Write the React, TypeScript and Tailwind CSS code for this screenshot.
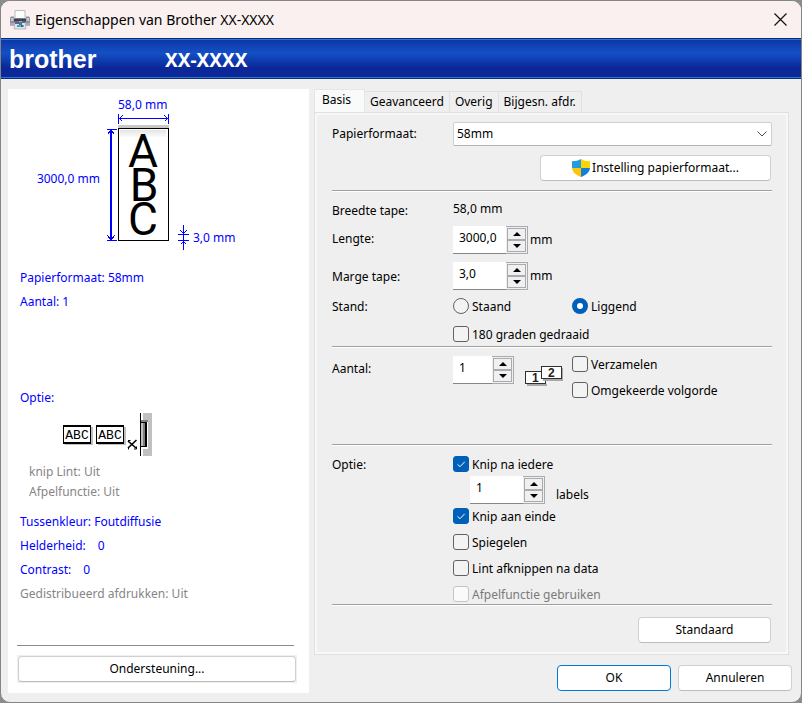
import { useState } from "react";
import type { ReactNode } from "react";

const TABS = ["Geavanceerd", "Overig", "Bijgesn. afdr."];

const BUTTON =
  "flex h-[26px] items-center justify-center rounded-[4px] border border-[#d0d0d0] border-b-[#bcbcbc] bg-white hover:bg-[#f5f9fd]";

function PrinterIcon() {
  return (
    <svg width="20" height="20" viewBox="0 0 20 20" aria-hidden="true">
      <path d="M5 .5h10v8H5z" fill="#fdfdfd" stroke="#b9bcc0" />
      <path d="M1 6.5Q0 7 0 9v6.5h20V9q0-2-1-2.500h-3V10H4V6.500z" fill="#8d9296" />
      <path d="M1 8h2.500v3H1zM16.500 8H19v3h-2.500z" fill="#c6cacd" />
      <path d="M4 8.500h12v3.500H4z" fill="#3c4248" />
      <path d="M0 13h20v2.500H0z" fill="#a7abae" />
      <path d="M5 11.500h10L16 19H4z" fill="#dfe4e6" stroke="#aeb3b6" strokeWidth=".8" />
      <path d="M5 11h4v3H5z" fill="#7b4fae" />
      <path d="M9 12h3v3H9z" fill="#2f8f6a" />
      <path d="M12 11h3v2h-3z" fill="#3c6bd0" />
      <path d="M7 15h3v2H7z" fill="#3bb3a3" />
      <path d="M10.500 15h3v2h-3z" fill="#4058b8" />
    </svg>
  );
}

function ShieldIcon() {
  return (
    <svg width="18" height="18" viewBox="0 0 18 18" aria-hidden="true">
      <path d="M9 0C6.500 1.600 3.500 2.200 0 2.200V9h9z" fill="#1f9ce4" />
      <path d="M9 0c2.500 1.600 5.500 2.200 9 2.200V9H9z" fill="#ffd400" />
      <path d="M0 9c.3 4 3.600 7 9 9V9z" fill="#ffc40a" />
      <path d="M18 9c-.3 4-3.600 7-9 9V9z" fill="#1180d6" />
    </svg>
  );
}

function CollateIcon() {
  return (
    <svg width="39" height="21" viewBox="0 0 39 21" aria-hidden="true">
      <path d="M2 18h20v2H2z" fill="#a8a8a8" />
      <rect x=".5" y="5.500" width="20" height="12" fill="#fff" stroke="#303030" />
      <text x="7" y="16" fontSize="12" fontWeight="700" fontFamily="Liberation Sans, sans-serif" fill="#222">
        1
      </text>
      <path d="M18 13h20v2H18zM37 2h1v13h-1z" fill="#a8a8a8" />
      <rect x="16.500" y=".5" width="20" height="12" fill="#fff" stroke="#303030" />
      <text x="23" y="11" fontSize="12" fontWeight="700" fontFamily="Liberation Sans, sans-serif" fill="#222">
        2
      </text>
    </svg>
  );
}

function TapePreview() {
  return (
    <svg width="301" height="168" viewBox="0 0 301 168" role="img" aria-label="Voorbeeld van tape">
      <defs>
        <linearGradient id="tape" x1="0" y1="0" x2="0" y2="1">
          <stop offset="0" stopColor="#e4e6e6" />
          <stop offset="1" stopColor="#fafbfb" />
        </linearGradient>
      </defs>
      <rect x="110" y="36" width="51" height="3" fill="#c8c8c8" />
      <rect x="110.500" y="39.500" width="50" height="112" fill="#fff" stroke="#000" />
      <rect x="112" y="41" width="46" height="7" fill="url(#tape)" />
      <g fontFamily="Roboto, sans-serif" fontSize="46" textAnchor="middle">
        <text x="135" y="78">A</text>
        <text x="136" y="112">B</text>
        <text x="135" y="146">C</text>
      </g>
      <g stroke="#00f" fill="none" shapeRendering="crispEdges">
        <path d="M110.500 25v10M160.500 25v10M111 29.500h49" />
        <path d="M114.500 26.500l-3 3 3 3M156.500 26.500l3 3-3 3" />
        <path d="M99 40.500h10M99 151.500h10" />
        <path d="M103 41v110" strokeWidth="2" />
        <path d="M99.500 45.500l3-4h1l3 4M99.500 146.500l3 4h1l3-4" />
        <path d="M170 145.500h11M170 151.500h11M175.500 136v25" />
        <path d="M172.500 141.500l3 3 3-3M172.500 155.500l3-3 3 3" />
      </g>
      <g fill="#00f" fontSize="12">
        <text x="110" y="20">58,0 mm</text>
        <text x="92" y="94" textAnchor="end">
          3000,0 mm
        </text>
        <text x="185" y="153">3,0 mm</text>
      </g>
    </svg>
  );
}

function CutPreview() {
  return (
    <svg width="301" height="43" viewBox="0 0 301 43" role="img" aria-label="Snijoptie">
      {[55, 88].map((x) => (
        <g key={x}>
          <path d={`M${x + 2} 14h28v18h-28z`} fill="#c0c0c0" />
          <path d={`M${x} 12h28v19h-28z`} fill="#000" />
          <path d={`M${x + 1} 14h26v15h-26z`} fill="#fff" />
          <text
            x={x + 14}
            y="26"
            textAnchor="middle"
            fontSize="13"
            fontFamily="Liberation Mono, monospace"
          >
            ABC
          </text>
        </g>
      ))}
      <g stroke="#000" fill="none">
        <path d="M120 28l8 7M120 35l8.500-8" strokeWidth="1.600" />
        <path d="M120 27.500h2.500M120.500 34v2.500M126 36h2.500v-2.500" />
      </g>
      <g shapeRendering="crispEdges">
        <path d="M135 0h9v43h-9z" fill="#c0c0c0" />
        <path d="M133 7h7v29h-7z" fill="#fff" />
        <path d="M133 7h7v2h-7z" fill="#808080" />
        <path d="M132 0h1v43h-1z" fill="#000" />
        <path d="M133 9h6v25h-6z" fill="#000" />
        <path d="M133 10h2v23h-2z" fill="#c0c0c0" />
        <path d="M135 10h2v23h-2z" fill="#808080" />
      </g>
    </svg>
  );
}

function Rule() {
  return <hr className="h-[2px] border-0 border-t border-[#a0a0a0] bg-white" />;
}

type SpinnerProps = { id: string; label?: string; initial: number; decimals?: number; narrow?: boolean };

function Spinner({ id, label, initial, decimals = 0, narrow = false }: SpinnerProps) {
  const [text, setText] = useState(initial.toFixed(decimals).replace(".", ","));

  const step = (delta: number) => {
    const next = Math.max(0, (parseFloat(text.replace(",", ".")) || 0) + delta);
    setText(next.toFixed(decimals).replace(".", ","));
  };

  const arrow = "flex flex-1 items-center justify-center border border-[#a9abae] bg-[#f0f0f0]";

  return (
    <div className="flex h-7">
      <input
        id={id}
        aria-label={label}
        value={text}
        onChange={(e) => setText(e.target.value)}
        className={`${narrow ? "w-[39px]" : "w-[53px]"} border-b border-[#868686] bg-white pb-1 pl-[6px] outline-none`}
      />
      <div className="flex w-[22px] flex-col border border-l-0 border-[#a9abae] p-px">
        <button type="button" aria-label="Verhogen" onClick={() => step(1)} className={arrow}>
          <svg width="8" height="4" viewBox="0 0 8 4" aria-hidden="true">
            <path d="M0 4l4-4 4 4z" />
          </svg>
        </button>
        <button type="button" aria-label="Verlagen" onClick={() => step(-1)} className={arrow}>
          <svg width="8" height="4" viewBox="0 0 8 4" aria-hidden="true">
            <path d="M0 0l4 4 4-4z" />
          </svg>
        </button>
      </div>
    </div>
  );
}

function Check({ children, checked, disabled }: { children: ReactNode; checked?: boolean; disabled?: boolean }) {
  return (
    <label className={`flex h-5 items-center gap-[3px] ${disabled ? "text-[#7a7a7a]" : ""}`}>
      <span className="relative flex">
        <input
          type="checkbox"
          defaultChecked={checked}
          disabled={disabled}
          className="peer size-4 appearance-none rounded-[3px] border border-[#626262] bg-[#f3f3f3] checked:border-[#005fb8] checked:bg-[#005fb8] disabled:border-[#c5c5c5] disabled:bg-[#f9fbfa]"
        />
        <svg
          viewBox="0 0 16 16"
          className="pointer-events-none absolute inset-0 hidden size-4 peer-checked:block"
          aria-hidden="true"
        >
          <path d="M4.500 8.300l2.500 2.400 4.700-4.900" fill="none" stroke="#fff" />
        </svg>
      </span>
      <span className="pt-px">{children}</span>
    </label>
  );
}

function Radio({ children, checked }: { children: ReactNode; checked?: boolean }) {
  return (
    <label className="flex h-5 items-center gap-[3px]">
      <input
        type="radio"
        name="stand"
        defaultChecked={checked}
        className="size-4 appearance-none rounded-full border border-[#626262] bg-[#f3f3f3] checked:border-[5px] checked:border-[#005fb8] checked:bg-white"
      />
      <span className="pt-px">{children}</span>
    </label>
  );
}

function SummaryPanel() {
  return (
    <aside className="flex flex-col bg-white pb-[10px] leading-5 text-[#00f]">
      <TapePreview />
      <div className="mt-[9px] px-3 leading-6">
        <p>Papierformaat: 58mm</p>
        <p>Aantal: 1</p>
        <p className="mt-[72px]">Optie:</p>
      </div>
      <div className="mt-[3px]">
        <CutPreview />
      </div>
      <div className="px-[21px] pt-[6px] text-[#868686]">
        <p>knip Lint: Uit</p>
        <p>Afpelfunctie: Uit</p>
      </div>
      <div className="mt-2 px-3 leading-6">
        <p>Tussenkleur: Foutdiffusie</p>
        <p className="flex gap-3">
          <span>Helderheid:</span>
          <span>0</span>
        </p>
        <p className="flex gap-3">
          <span>Contrast:</span>
          <span>0</span>
        </p>
        <p className="text-[#868686]">Gedistribueerd afdrukken: Uit</p>
      </div>
      <hr className="mr-[15px] ml-[9px] mt-auto border-[#8c8c8c]" />
      <div className="mt-[9px] mr-3 ml-[9px] bg-[#efefef] p-px text-black">
        <button type="button" className={`${BUTTON} w-full`}>
          Ondersteuning...
        </button>
      </div>
    </aside>
  );
}

function BasicSettings() {
  return (
    <div className="border border-[#e0e0e0]">
      <div className="border-2 border-[#f8f8f8] pt-[7px] pr-[14px] pb-[9px] pl-[15px]">
        <div className="grid grid-cols-[121px_1fr] items-center gap-y-[9px]">
          <label htmlFor="papier">Papierformaat:</label>
          <div className="relative">
            <select
              id="papier"
              className="block h-6 w-full appearance-none rounded-[2px] border border-[#cfcfcf] border-b-[#b4b4b4] bg-white px-[3px] outline-none"
            >
              <option>58mm</option>
            </select>
            <svg
              width="10"
              height="6"
              viewBox="0 0 10 6"
              className="pointer-events-none absolute top-[9px] right-[5px]"
              aria-hidden="true"
            >
              <path d="M.5.5L5 5 9.500.5" fill="none" stroke="#505050" />
            </svg>
          </div>
          <button type="button" className={`${BUTTON} col-start-2 mr-px w-[231px] justify-self-end`}>
            <ShieldIcon />
            <span className="pl-[2px]">Instelling papierformaat...</span>
          </button>
        </div>

        <div className="mt-[9px]">
          <Rule />
        </div>

        <div className="mt-2 grid grid-cols-[121px_1fr]">
          <span className="pt-px leading-5">Breedte tape:</span>
          <span className="leading-[18px]">58,0 mm</span>
          <label htmlFor="lengte" className="mt-2 leading-5">
            Lengte:
          </label>
          <div className="mt-[5px] flex items-center gap-[2px]">
            <Spinner id="lengte" initial={3000} decimals={1} />
            mm
          </div>
          <label htmlFor="marge" className="mt-[13px] leading-5">
            Marge tape:
          </label>
          <div className="mt-2 flex items-center gap-[2px]">
            <Spinner id="marge" initial={3} decimals={1} />
            mm
          </div>
          <span className="mt-[7px] leading-5">Stand:</span>
          <div className="mt-[6px] grid grid-cols-[119px_1fr]">
            <Radio>Staand</Radio>
            <Radio checked>Liggend</Radio>
          </div>
          <div className="col-start-2 mt-[7px]">
            <Check>180 graden gedraaid</Check>
          </div>
        </div>

        <div className="mt-[2px]">
          <Rule />
        </div>

        <div className="grid min-h-24 grid-cols-[121px_119px_1fr] pt-[6px]">
          <label htmlFor="aantal" className="mt-[5px] leading-5">
            Aantal:
          </label>
          <div className="mt-[2px] flex items-start gap-[11px]">
            <Spinner id="aantal" initial={1} narrow />
            <div className="pt-[10px]">
              <CollateIcon />
            </div>
          </div>
          <div className="flex flex-col gap-[6px]">
            <Check>Verzamelen</Check>
            <Check>Omgekeerde volgorde</Check>
          </div>
        </div>

        <Rule />

        <div className="grid grid-cols-[121px_1fr] pt-2">
          <span className="pt-px leading-5">Optie:</span>
          <div className="flex flex-col gap-[6px]">
            <div className="flex flex-col gap-[2px]">
              <Check checked>Knip na iedere</Check>
              <div className="flex items-end gap-[11px] pl-[17px]">
                <Spinner id="knip" label="Aantal labels" initial={1} />
                <span className="leading-[18px]">labels</span>
              </div>
              <Check checked>Knip aan einde</Check>
            </div>
            <Check>Spiegelen</Check>
            <Check>Lint afknippen na data</Check>
            <Check disabled>Afpelfunctie gebruiken</Check>
          </div>
        </div>

        <Rule />

        <button type="button" className={`${BUTTON} mt-[11px] mr-px ml-auto w-[133px]`}>
          Standaard
        </button>
      </div>
    </div>
  );
}

export default function App() {
  return (
    <div className="min-h-screen bg-[#8c8c8c] font-['Noto_Sans',sans-serif] text-[12px] text-black">
      <div className="min-h-screen overflow-hidden rounded-[10px] border border-[#858585] bg-[#efefef]">
        <header className="flex h-[37px] items-center gap-[5px] bg-[#f9f0ef] pr-[14px] pl-[9px]">
          <PrinterIcon />
          <h1 className="flex-1 text-[14px]">Eigenschappen van Brother XX-XXXX</h1>
          <button type="button" aria-label="Sluiten">
            <svg width="13" height="13" viewBox="0 0 13 13" aria-hidden="true">
              <path d="M.5.5l12 12M12.500.5l-12 12" stroke="#111" strokeWidth="1.200" />
            </svg>
          </button>
        </header>

        <div className="border-y border-[#0a2a80]">
          <div className="flex h-[39px] items-center border-y border-[#2f78cc] bg-linear-to-b from-[#0d38a8] via-[#1450c6] via-35% to-[#0b2798] to-75% pl-[8px] text-white">
            <span className="w-[156px] font-['Liberation_Sans',sans-serif] text-[25px] leading-9 font-bold">
              brother
            </span>
            <span className="pt-[3px] text-[19px] font-bold">XX-XXXX</span>
          </div>
        </div>

        <main className="grid grid-cols-[301px_1fr] gap-x-[5px] px-[7px] pt-[10px] pb-[8px]">
          <SummaryPanel />
          <div className="flex flex-col pb-[2px]">
            <div role="tablist" className="flex items-end">
              <button
                type="button"
                role="tab"
                aria-selected="true"
                className="h-[23px] w-[51px] border border-b-0 border-[#e6e6e6] bg-[#f9fbfa] pr-[6px] pb-[2px]"
              >
                Basis
              </button>
              {TABS.map((tab) => (
                <button
                  key={tab}
                  type="button"
                  role="tab"
                  aria-selected="false"
                  className="h-[21px] border-t border-r border-[#e0e0e0] px-[5px]"
                >
                  {tab}
                </button>
              ))}
            </div>
            <div className="mr-[5px]">
              <BasicSettings />
            </div>
            <div className="mt-[10px] mr-[2px] flex justify-end gap-[7px]">
              <button type="button" className="h-[26px] w-[114px] rounded-[4px] border border-[#0078d4] bg-white">
                OK
              </button>
              <button type="button" className={`${BUTTON} w-[114px]`}>
                Annuleren
              </button>
            </div>
          </div>
        </main>
      </div>
    </div>
  );
}
